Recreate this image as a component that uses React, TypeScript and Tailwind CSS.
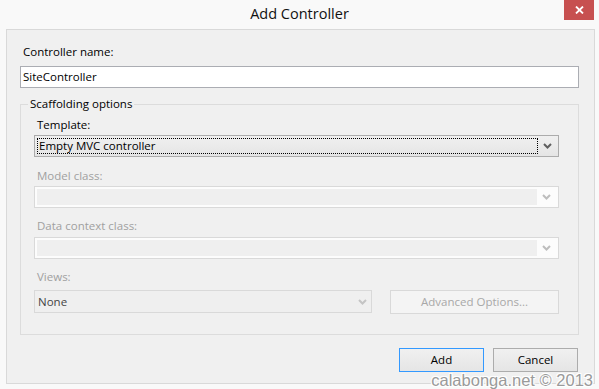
import React from "react";

const font = { fontFamily: '"Open Sans", "Noto Sans", sans-serif' };

function Chevron({ color }: { color: string }) {
  return (
    <svg width="9" height="6" viewBox="0 0 9 6">
      <polyline points="1,1 4.5,4.5 8,1" fill="none" stroke={color} strokeWidth="2" />
    </svg>
  );
}

function DisabledCombo() {
  return (
    <div className="flex h-[22px] border border-[#d9d9d9] bg-[#fcfcfc] p-[2px]">
      <div className="flex-1 bg-[#efefef]" />
      <div className="flex w-[19px] items-center justify-center">
        <Chevron color="#bdbdbd" />
      </div>
    </div>
  );
}

export default function App() {
  return (
    <div
      className="relative h-[389px] w-[599px] overflow-hidden bg-[#f9f9f9] text-[11.5px] text-black"
      style={font}
    >
      {/* title bar */}
      <div className="flex h-[29px] items-center justify-center pb-[1px] text-[14.5px] text-[#111]">
        Add Controller
      </div>
      <div className="absolute right-[5px] top-0 flex h-[20px] w-[30px] items-center justify-center bg-[#c75050] text-white">
        <svg width="9" height="8" viewBox="0 0 9 8">
          <path d="M1 0.5 L8 7.5 M8 0.5 L1 7.5" stroke="white" strokeWidth="1.8" />
        </svg>
      </div>

      {/* main panel */}
      <div className="ml-[6px] h-[355px] w-[589px] border border-[#d9d9d9] bg-[#f0f0f0] pl-[13px] pr-[15px] pt-[14px]">
        <div className="h-[16px] pl-[3px] leading-[16px]">Controller name:</div>
        <div className="mt-[6px] flex h-[22px] items-center border border-[#abadb3] bg-white pl-[2px] leading-[16px]">
          SiteController
        </div>

        {/* group box */}
        <div className="relative mt-[16px] h-[231px] border border-[#dcdcdc] pl-[13px] pr-[19px] pt-[12px]">
          <span className="absolute -top-[9px] left-[7px] bg-[#f0f0f0] px-[2px] leading-[16px]">
            Scaffolding options
          </span>

          <div className="h-[16px] pl-[3px] leading-[16px]">Template:</div>
          <div className="mt-[2px] flex h-[22px] border border-[#acacac] bg-gradient-to-b from-[#f0f0f0] to-[#e5e5e5] p-[2px]">
            <div className="flex flex-1 items-center border border-dotted border-black pl-[1px] leading-[16px]">
              Empty MVC controller
            </div>
            <div className="flex w-[18px] items-center justify-center">
              <Chevron color="#5f5f5f" />
            </div>
          </div>

          <div className="mt-[11px] h-[16px] pl-[3px] leading-[16px] text-[#a0a0a0]">Model class:</div>
          <div className="mt-[2px]">
            <DisabledCombo />
          </div>

          <div className="mt-[10px] h-[16px] pl-[3px] leading-[16px] text-[#a0a0a0]">Data context class:</div>
          <div className="mt-[3px]">
            <DisabledCombo />
          </div>

          <div className="mt-[10px] h-[16px] pl-[3px] leading-[16px] text-[#a0a0a0]">Views:</div>
          <div className="mt-[5px] flex items-start gap-[18px]">
            <div className="flex h-[23px] w-[338px] items-center border border-[#d9d9d9] bg-[#efefef] pl-[3px] pr-[4px] text-[#444]">
              <span className="flex-1 leading-[16px]">None</span>
              <Chevron color="#c4c4c4" />
            </div>
            <div className="flex h-[24px] flex-1 items-center justify-center border border-[#d9d9d9] bg-[#f4f4f4] text-[#a8a8a8]">
              Advanced Options...
            </div>
          </div>
        </div>

        {/* buttons */}
        <div className="mt-[13px] flex justify-end gap-[9px] pr-[1px]">
          <div className="flex h-[24px] w-[85px] items-center justify-center border border-[#3399ff] bg-gradient-to-b from-[#f0f0f0] to-[#e5e5e5]">
            Add
          </div>
          <div className="flex h-[24px] w-[85px] items-center justify-center border border-[#acacac] bg-gradient-to-b from-[#f0f0f0] to-[#e5e5e5]">
            Cancel
          </div>
        </div>
      </div>

      {/* watermark */}
      <div
        className="absolute bottom-[-1px] right-[6px] text-[16.5px] leading-[20px] text-[#9a9a9a]"
        style={{
          fontFamily: '"Liberation Sans", Arial, sans-serif',
          textShadow: "1px 1px 0 #fff, -1px -1px 0 #fff, 1px -1px 0 #fff, -1px 1px 0 #fff",
        }}
      >
        calabonga.net © 2013
      </div>
    </div>
  );
}
